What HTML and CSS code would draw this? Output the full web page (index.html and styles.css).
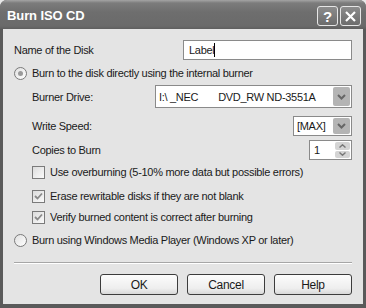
FILE: index.html
```html
<!DOCTYPE html>
<html lang="en">
<head>
  <meta charset="UTF-8" />
  <title>Burn ISO CD</title>
  <link rel="stylesheet" href="styles.css">
</head>
<body>
  <div class="window">
    <div class="titlebar">
      <span class="title">Burn ISO CD</span>
      <div class="title-btns">
        <span class="tbtn">?</span>
        <span class="tbtn">
          <svg width="13" height="13" viewBox="0 0 13 13"><path d="M2 2 L11 11 M11 2 L2 11" stroke="#fff" stroke-width="2.2" /></svg>
        </span>
      </div>
    </div>

    <div class="body">
      <div class="row r-name">
        <span class="lbl">Name of the Disk</span>
        <div class="field name-field">Label<span class="caret"></span></div>
      </div>

      <div class="row r-radio1">
        <span class="radio on"></span>
        <span>Burn to the disk directly using the internal burner</span>
      </div>

      <div class="row r-drive indent">
        <span class="lbl">Burner Drive:</span>
        <div class="field combo drive-combo">
          <span class="combo-text">I:\ _NEC<span class="gap"></span>DVD_RW ND-3551A</span>
          <span class="drop"><svg width="9" height="6" viewBox="0 0 9 6"><path d="M1 1 L4.5 4.5 L8 1" fill="none" stroke="#666" stroke-width="2" /></svg></span>
        </div>
      </div>

      <div class="row r-speed indent">
        <span class="lbl">Write Speed:</span>
        <div class="field combo speed-combo">
          <span class="combo-text">[MAX]</span>
          <span class="drop"><svg width="9" height="6" viewBox="0 0 9 6"><path d="M1 1 L4.5 4.5 L8 1" fill="none" stroke="#666" stroke-width="2" /></svg></span>
        </div>
      </div>

      <div class="row r-copies indent">
        <span class="lbl">Copies to Burn</span>
        <div class="field spin">
          <span class="combo-text">1</span>
          <span class="spin-btns">
            <span class="sbtn"><svg width="7" height="4" viewBox="0 0 7 4"><path d="M0.5 3.5 L3.5 0.8 L6.5 3.5" fill="none" stroke="#777" stroke-width="1.4" /></svg></span>
            <span class="sbtn"><svg width="7" height="4" viewBox="0 0 7 4"><path d="M0.5 0.5 L3.5 3.2 L6.5 0.5" fill="none" stroke="#777" stroke-width="1.4" /></svg></span>
          </span>
        </div>
      </div>

      <div class="row r-cb1 indent">
        <span class="check"></span>
        <span>Use overburning (5-10% more data but possible errors)</span>
      </div>
      <div class="row r-cb2 indent">
        <span class="check"><svg width="9" height="8" viewBox="0 0 9 8"><path d="M1 4 L3.5 6.5 L8 1.5" fill="none" stroke="#8a8a8a" stroke-width="1.8" /></svg></span>
        <span>Erase rewritable disks if they are not blank</span>
      </div>
      <div class="row r-cb3 indent">
        <span class="check"><svg width="9" height="8" viewBox="0 0 9 8"><path d="M1 4 L3.5 6.5 L8 1.5" fill="none" stroke="#8a8a8a" stroke-width="1.8" /></svg></span>
        <span>Verify burned content is correct after burning</span>
      </div>

      <div class="row r-radio2">
        <span class="radio"></span>
        <span>Burn using Windows Media Player (Windows XP or later)</span>
      </div>

      <div class="sep"></div>

      <div class="buttons">
        <span class="btn">OK</span>
        <span class="btn">Cancel</span>
        <span class="btn">Help</span>
      </div>
    </div>
  </div>
</body>
</html>
```

FILE: styles.css
```css
html, body {
  margin: 0;
  padding: 0;
  background: #e8e8e8;
}
.window {
  width: 366px;
  height: 308px;
  box-sizing: border-box;
  display: flex;
  flex-direction: column;
  background: #5a5a5a;
  border-radius: 7px 7px 0 0;
  font-family: "Liberation Sans", Arial, sans-serif;
  font-size: 11px;
  letter-spacing: -0.3px;
  color: #1a1a1a;
  white-space: nowrap;
}
.titlebar {
  height: 29px;
  flex: none;
  display: flex;
  align-items: center;
  justify-content: space-between;
  padding: 0 5px 0 7px;
  border-radius: 7px 7px 0 0;
  background: linear-gradient(#a4a4a4 0px, #7c7c7c 3px, #6e6e6e 12px, #6a6a6a 26px, #5e5e5e 29px);
}
.title {
  color: #fff;
  font-weight: bold;
  font-size: 13px;
  letter-spacing: -0.1px;
  margin-top: 1px;
}
.title-btns {
  display: flex;
  gap: 2px;
  margin-top: 3px;
}
.tbtn {
  width: 19px;
  height: 18px;
  border: 1px solid #e6e6e6;
  border-radius: 3px;
  background: linear-gradient(#8c8c8c, #6c6c6c);
  color: #fff;
  font-weight: bold;
  font-size: 15px;
  letter-spacing: 0;
  display: flex;
  align-items: center;
  justify-content: center;
}
.body {
  flex: 1;
  margin: 0 3px 4px 3px;
  background: #e4e4e4;
  padding: 11px 11px 0 11px;
  box-sizing: border-box;
}
.row {
  display: flex;
  align-items: center;
  gap: 4px;
  height: 16px;
}
.indent {
  padding-left: 18px;
}
.lbl {
  flex: 1;
}
.field {
  height: 20px;
  box-sizing: border-box;
  border: 1px solid #8a8a8a;
  background: #fff;
  display: flex;
  align-items: center;
}
.r-name {
  height: 20px;
}
.name-field {
  width: 169px;
  padding-left: 5px;
}
.caret {
  width: 1px;
  height: 14px;
  background: #000;
}
.r-radio1 { margin-top: 5px; }
.r-drive { margin-top: 4px; height: 23px; }
.r-speed { margin-top: 8px; height: 20px; }
.r-copies { margin-top: 4px; height: 20px; }
.r-cb1 { margin-top: 4px; }
.r-cb2 { margin-top: 8px; }
.r-cb3 { margin-top: 5px; }
.r-radio2 { margin-top: 7px; }

.combo {
  justify-content: space-between;
  padding: 1px 1px 1px 3px;
}
.combo-text .gap {
  display: inline-block;
  width: 20px;
}
.drive-combo {
  width: 197px;
  height: 23px;
}
.speed-combo {
  width: 59px;
}
.drop {
  width: 17px;
  height: 100%;
  background: #b4b4b4;
  border-radius: 2px;
  display: flex;
  align-items: center;
  justify-content: center;
}
.spin {
  width: 43px;
  justify-content: space-between;
  padding: 1px 1px 1px 4px;
}
.spin-btns {
  display: flex;
  flex-direction: column;
  gap: 1px;
  height: 100%;
}
.sbtn {
  flex: 1;
  width: 15px;
  background: #d4d4d4;
  border-radius: 2px;
  display: flex;
  align-items: center;
  justify-content: center;
}
.radio {
  width: 11px;
  height: 11px;
  border: 1px solid #7a7a7a;
  border-radius: 50%;
  background: linear-gradient(135deg, #e0e0e0, #fff);
  display: flex;
  align-items: center;
  justify-content: center;
  margin-right: 1px;
}
.radio.on::after {
  content: "";
  width: 5px;
  height: 5px;
  border-radius: 50%;
  background: #9a9a9a;
}
.check {
  width: 11px;
  height: 11px;
  border: 1px solid #7a7a7a;
  background: linear-gradient(135deg, #dcdcdc, #fafafa);
  display: flex;
  align-items: center;
  justify-content: center;
  margin-right: 1px;
}
.sep {
  margin-top: 14px;
  height: 1px;
  border-top: 1px solid #a6a6a6;
  background: #fff;
}
.buttons {
  margin-top: 10px;
  display: flex;
  justify-content: flex-end;
  gap: 9px;
}
.btn {
  width: 78px;
  height: 21px;
  box-sizing: border-box;
  border: 1px solid #3c3c3c;
  border-radius: 3px;
  background: linear-gradient(#fcfcfc, #eeeeee 70%, #d8d8d8);
  font-size: 12px;
  display: flex;
  align-items: center;
  justify-content: center;
}
```
